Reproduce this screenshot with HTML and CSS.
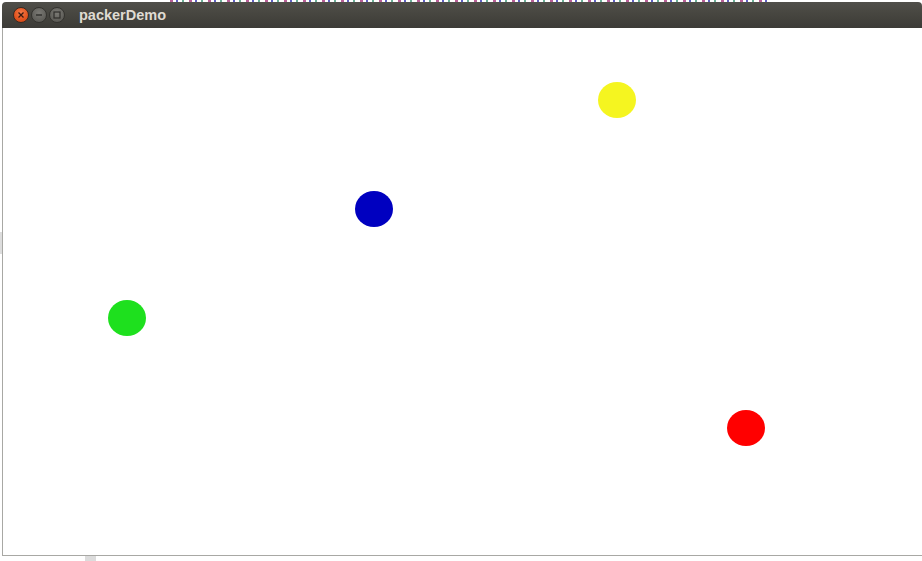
FILE: index.html
```html
<!DOCTYPE html>
<html>
<head>
<meta charset="utf-8">
<title>packerDemo</title>
<link rel="stylesheet" href="styles.css">
</head>
<body>
<div class="desktop">
  <div class="behind-strip"></div>
  <div class="behind-tab"></div>
  <div class="behind-side"></div>
  <div class="window">
    <div class="titlebar">
      <div class="buttons">
        <span class="btn close"><svg width="8" height="8" viewBox="0 0 8 8"><path d="M1.5 1.5 L6.5 6.5 M6.5 1.5 L1.5 6.5" stroke="#3a1a10" stroke-width="1.3" fill="none"/></svg></span>
        <span class="btn minimize"><svg width="8" height="8" viewBox="0 0 8 8"><path d="M1 4 H7" stroke="#2f2e2b" stroke-width="1.4"/></svg></span>
        <span class="btn maximize"><svg width="8" height="8" viewBox="0 0 8 8"><rect x="1" y="1" width="6" height="6" stroke="#2f2e2b" stroke-width="1.2" fill="none"/></svg></span>
      </div>
      <span class="title">packerDemo</span>
    </div>
    <div class="canvas">
      <span class="dot yellow" style="left:595px;top:54px"></span>
      <span class="dot blue" style="left:352px;top:163px"></span>
      <span class="dot green" style="left:105px;top:272px"></span>
      <span class="dot red" style="left:724px;top:382px"></span>
    </div>
  </div>
</div>
</body>
</html>
```

FILE: styles.css
```css
html, body {
  margin: 0;
  padding: 0;
  width: 922px;
  height: 561px;
  overflow: hidden;
  background: #ffffff;
}

.desktop {
  position: relative;
  width: 922px;
  height: 561px;
  background: #ffffff;
}

.behind-strip {
  position: absolute;
  left: 170px;
  top: 0;
  width: 600px;
  height: 2px;
  background: repeating-linear-gradient(90deg, #9a1a6a 0 3px, #ffffff 3px 6px, #1a1aa8 6px 8px, #ffffff 8px 12px, #2a8a6a 12px 14px, #ffffff 14px 19px);
  opacity: 0.7;
}

.behind-tab {
  position: absolute;
  left: 85px;
  top: 556px;
  width: 11px;
  height: 5px;
  background: #dcdcdc;
}

.behind-side {
  position: absolute;
  left: 0;
  top: 232px;
  width: 2px;
  height: 22px;
  background: #dddddd;
}

.window {
  position: absolute;
  left: 2px;
  top: 2px;
  width: 920px;
  height: 554px;
  display: flex;
  flex-direction: column;
}

.titlebar {
  height: 26px;
  flex: none;
  display: flex;
  align-items: center;
  background: linear-gradient(180deg, #504f4a 0%, #46453f 50%, #3c3b37 100%);
  border-radius: 4px 4px 0 0;
  padding-left: 11px;
  box-sizing: border-box;
}

.buttons {
  display: flex;
  gap: 2px;
  align-items: center;
}

.btn {
  width: 16px;
  height: 16px;
  flex: none;
  border-radius: 50%;
  display: flex;
  align-items: center;
  justify-content: center;
  box-sizing: border-box;
}

.close {
  background: radial-gradient(circle at 50% 35%, #f47a4a 0%, #e2531d 60%, #c8451a 100%);
  border: 1px solid #3a2a22;
}

.minimize,
.maximize {
  background: radial-gradient(circle at 50% 35%, #7a7974 0%, #5e5d58 70%, #52514c 100%);
  border: 1px solid #34332f;
}

.title {
  margin-left: 14px;
  font-family: "Liberation Sans", "DejaVu Sans", sans-serif;
  font-weight: bold;
  font-size: 14.5px;
  color: #dfdbd2;
}

.canvas {
  position: relative;
  flex: 1;
  background: #ffffff;
  border-left: 1px solid #a8a8a4;
  border-bottom: 1px solid #a8a8a4;
}

.dot {
  position: absolute;
  width: 38px;
  height: 36px;
  border-radius: 50%;
}

.yellow { background: #f5f520; }
.blue { background: #0000c0; }
.green { background: #1ee01e; }
.red { background: #ff0000; }
```
